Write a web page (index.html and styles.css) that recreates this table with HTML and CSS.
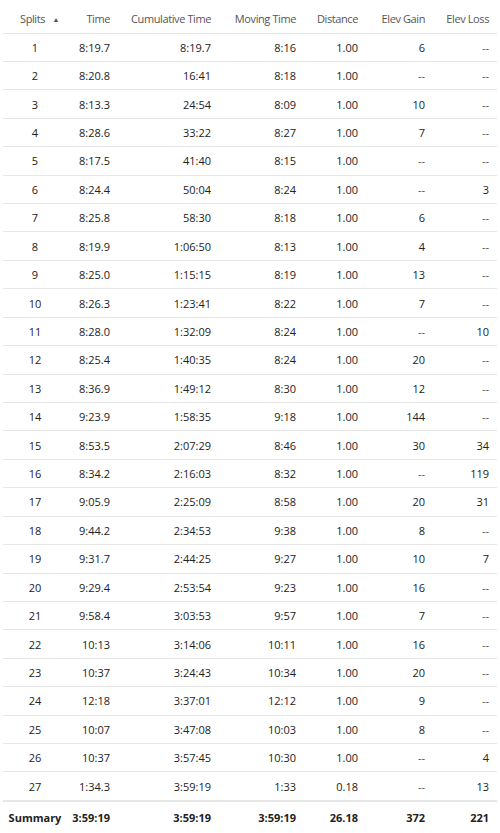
FILE: index.html
```html
<!DOCTYPE html>
<html>
<head>
<meta charset="utf-8">
<link rel="stylesheet" href="styles.css">
</head>
<body>
<div class="splits">
  <div class="row head">
    <div class="c first hsplit">Splits <span class="arrow">▲</span></div>
    <div class="c">Time</div>
    <div class="c">Cumulative Time</div>
    <div class="c">Moving Time</div>
    <div class="c">Distance</div>
    <div class="c">Elev Gain</div>
    <div class="c">Elev Loss</div>
  </div>
  <div class="row"><div class="c first">1</div><div class="c">8:19.7</div><div class="c">8:19.7</div><div class="c">8:16</div><div class="c">1.00</div><div class="c">6</div><div class="c na">--</div></div>
  <div class="row"><div class="c first">2</div><div class="c">8:20.8</div><div class="c">16:41</div><div class="c">8:18</div><div class="c">1.00</div><div class="c na">--</div><div class="c na">--</div></div>
  <div class="row"><div class="c first">3</div><div class="c">8:13.3</div><div class="c">24:54</div><div class="c">8:09</div><div class="c">1.00</div><div class="c">10</div><div class="c na">--</div></div>
  <div class="row"><div class="c first">4</div><div class="c">8:28.6</div><div class="c">33:22</div><div class="c">8:27</div><div class="c">1.00</div><div class="c">7</div><div class="c na">--</div></div>
  <div class="row"><div class="c first">5</div><div class="c">8:17.5</div><div class="c">41:40</div><div class="c">8:15</div><div class="c">1.00</div><div class="c na">--</div><div class="c na">--</div></div>
  <div class="row"><div class="c first">6</div><div class="c">8:24.4</div><div class="c">50:04</div><div class="c">8:24</div><div class="c">1.00</div><div class="c na">--</div><div class="c">3</div></div>
  <div class="row"><div class="c first">7</div><div class="c">8:25.8</div><div class="c">58:30</div><div class="c">8:18</div><div class="c">1.00</div><div class="c">6</div><div class="c na">--</div></div>
  <div class="row"><div class="c first">8</div><div class="c">8:19.9</div><div class="c">1:06:50</div><div class="c">8:13</div><div class="c">1.00</div><div class="c">4</div><div class="c na">--</div></div>
  <div class="row"><div class="c first">9</div><div class="c">8:25.0</div><div class="c">1:15:15</div><div class="c">8:19</div><div class="c">1.00</div><div class="c">13</div><div class="c na">--</div></div>
  <div class="row"><div class="c first">10</div><div class="c">8:26.3</div><div class="c">1:23:41</div><div class="c">8:22</div><div class="c">1.00</div><div class="c">7</div><div class="c na">--</div></div>
  <div class="row"><div class="c first">11</div><div class="c">8:28.0</div><div class="c">1:32:09</div><div class="c">8:24</div><div class="c">1.00</div><div class="c na">--</div><div class="c">10</div></div>
  <div class="row"><div class="c first">12</div><div class="c">8:25.4</div><div class="c">1:40:35</div><div class="c">8:24</div><div class="c">1.00</div><div class="c">20</div><div class="c na">--</div></div>
  <div class="row"><div class="c first">13</div><div class="c">8:36.9</div><div class="c">1:49:12</div><div class="c">8:30</div><div class="c">1.00</div><div class="c">12</div><div class="c na">--</div></div>
  <div class="row"><div class="c first">14</div><div class="c">9:23.9</div><div class="c">1:58:35</div><div class="c">9:18</div><div class="c">1.00</div><div class="c">144</div><div class="c na">--</div></div>
  <div class="row"><div class="c first">15</div><div class="c">8:53.5</div><div class="c">2:07:29</div><div class="c">8:46</div><div class="c">1.00</div><div class="c">30</div><div class="c">34</div></div>
  <div class="row"><div class="c first">16</div><div class="c">8:34.2</div><div class="c">2:16:03</div><div class="c">8:32</div><div class="c">1.00</div><div class="c na">--</div><div class="c">119</div></div>
  <div class="row"><div class="c first">17</div><div class="c">9:05.9</div><div class="c">2:25:09</div><div class="c">8:58</div><div class="c">1.00</div><div class="c">20</div><div class="c">31</div></div>
  <div class="row"><div class="c first">18</div><div class="c">9:44.2</div><div class="c">2:34:53</div><div class="c">9:38</div><div class="c">1.00</div><div class="c">8</div><div class="c na">--</div></div>
  <div class="row"><div class="c first">19</div><div class="c">9:31.7</div><div class="c">2:44:25</div><div class="c">9:27</div><div class="c">1.00</div><div class="c">10</div><div class="c">7</div></div>
  <div class="row"><div class="c first">20</div><div class="c">9:29.4</div><div class="c">2:53:54</div><div class="c">9:23</div><div class="c">1.00</div><div class="c">16</div><div class="c na">--</div></div>
  <div class="row"><div class="c first">21</div><div class="c">9:58.4</div><div class="c">3:03:53</div><div class="c">9:57</div><div class="c">1.00</div><div class="c">7</div><div class="c na">--</div></div>
  <div class="row"><div class="c first">22</div><div class="c">10:13</div><div class="c">3:14:06</div><div class="c">10:11</div><div class="c">1.00</div><div class="c">16</div><div class="c na">--</div></div>
  <div class="row"><div class="c first">23</div><div class="c">10:37</div><div class="c">3:24:43</div><div class="c">10:34</div><div class="c">1.00</div><div class="c">20</div><div class="c na">--</div></div>
  <div class="row"><div class="c first">24</div><div class="c">12:18</div><div class="c">3:37:01</div><div class="c">12:12</div><div class="c">1.00</div><div class="c">9</div><div class="c na">--</div></div>
  <div class="row"><div class="c first">25</div><div class="c">10:07</div><div class="c">3:47:08</div><div class="c">10:03</div><div class="c">1.00</div><div class="c">8</div><div class="c na">--</div></div>
  <div class="row"><div class="c first">26</div><div class="c">10:37</div><div class="c">3:57:45</div><div class="c">10:30</div><div class="c">1.00</div><div class="c na">--</div><div class="c">4</div></div>
  <div class="row"><div class="c first">27</div><div class="c">1:34.3</div><div class="c">3:59:19</div><div class="c">1:33</div><div class="c">0.18</div><div class="c na">--</div><div class="c">13</div></div>
  <div class="row summary"><div class="c first">Summary</div><div class="c">3:59:19</div><div class="c">3:59:19</div><div class="c">3:59:19</div><div class="c">26.18</div><div class="c">372</div><div class="c">221</div></div>
</div>
</body>
</html>
```
FILE: styles.css
```css
html, body {
  margin: 0;
  padding: 0;
  background: #fff;
}
body {
  font-family: "Open Sans", "Liberation Sans", sans-serif;
  font-size: 11px;
  color: #222;
}
.splits {
  margin: 0 3px;
  width: 494px;
}
.row {
  display: grid;
  grid-template-columns: 64px 51px 101px 85px 62px 67px 64px;
  align-items: center;
  height: 28.43px;
  box-sizing: border-box;
  border-top: 1px solid #e6e6e6;
}
.c {
  text-align: right;
  padding-right: 8px;
  white-space: nowrap;
}
.c.first {
  text-align: center;
  padding-right: 0;
}
.head {
  height: 32.5px;
  border-top: none;
  color: #555;
  padding-top: 5px;
  letter-spacing: -0.4px;
}
.head .hsplit {
  text-align: left;
  padding-left: 17px;
}
.arrow {
  font-size: 7px;
  margin-left: 5px;
  vertical-align: 1px;
}
.na {
  color: #555;
}
.summary {
  height: 33px;
  border-top: 2px solid #e6e6e6;
  font-weight: bold;
  color: #222;
  padding-top: 1px;
}
```
